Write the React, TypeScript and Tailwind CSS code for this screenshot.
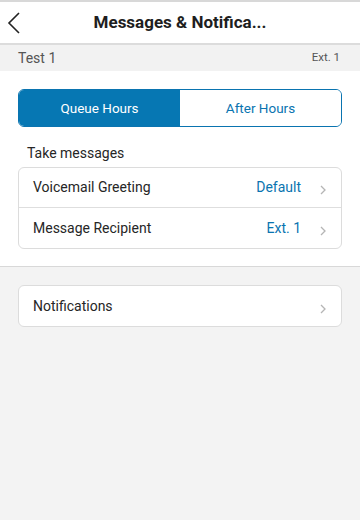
const Chevron = () => (
  <svg width="6" height="10" viewBox="0 0 6 10" className="mt-[5px] ml-[19px] mr-[15px]">
    <path d="M1 1 L5 5 L1 9" fill="none" stroke="#b5b5b5" strokeWidth="1.3" />
  </svg>
);

const Row = ({ label, value, last }: { label: string; value?: string; last?: boolean }) => (
  <div className={`flex h-10 items-center pl-[14px] ${last ? "" : "border-b border-[#dedede]"}`}>
    <span className="flex-1 text-[14px] text-[#262626]">{label}</span>
    {value && <span className="text-[14px] text-[#0a74b0]">{value}</span>}
    <Chevron />
  </div>
);

export default function App() {
  return (
    <div className="flex h-[520px] w-[360px] flex-col bg-[#f3f3f3] font-['Roboto',sans-serif]">
      <div className="border-t-2 border-[#d8d8d8] bg-white">
        <div className="relative flex h-[43px] items-center justify-center border-b-2 border-[#dcdcdc]">
          <svg width="14" height="22" viewBox="0 0 14 22" className="absolute left-[7px] top-[10px]">
            <path d="M12 1 L2 11 L12 21" fill="none" stroke="#222" strokeWidth="1.6" />
          </svg>
          <span className="text-[17px] font-bold text-[#1e1e1e]">Messages &amp; Notifica...</span>
        </div>
      </div>
      <div className="flex h-[26px] items-center justify-between bg-[#f2f2f2] pl-[18px] pr-[20px]">
        <span className="text-[14px] text-[#555]">Test 1</span>
        <span className="text-[11.5px] text-[#555]">Ext. 1</span>
      </div>
      <div className="border-b border-[#d8d8d8] bg-white px-[18px] pb-[17px] pt-[18px]">
        <div className="flex h-[38px] overflow-hidden rounded-[6px] border border-[#0a74b0]">
          <div className="flex flex-1 items-center justify-center bg-[#0677b3] text-[13.5px] text-white">Queue Hours</div>
          <div className="flex flex-1 items-center justify-center bg-white text-[13.5px] text-[#0a74b0]">After Hours</div>
        </div>
        <div className="mt-[16px] pl-[9px] text-[14px] leading-[20px] text-[#262626]">Take messages</div>
        <div className="mt-[4px] rounded-[6px] border border-[#dcdcdc] bg-white">
          <Row label="Voicemail Greeting" value="Default" />
          <Row label="Message Recipient" value="Ext. 1" last />
        </div>
      </div>
      <div className="px-[18px] pt-[18px]">
        <div className="rounded-[6px] border border-[#dcdcdc] bg-white">
          <Row label="Notifications" last />
        </div>
      </div>
    </div>
  );
}
